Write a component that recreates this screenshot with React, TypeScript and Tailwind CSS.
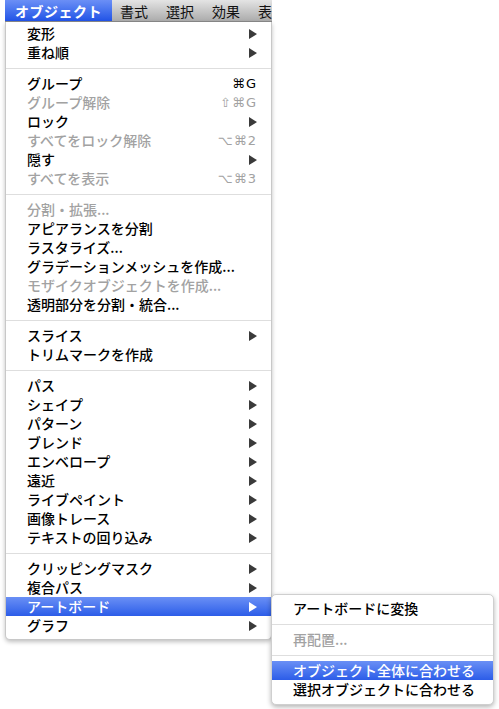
import React from 'react';

type Item =
  | { sep: true }
  | {
      sep?: false;
      label: string;
      disabled?: boolean;
      sub?: boolean;
      shortcut?: string;
      active?: boolean;
    };

const mainItems: Item[] = [
  { label: '変形', sub: true },
  { label: '重ね順', sub: true },
  { sep: true },
  { label: 'グループ', shortcut: '⌘G' },
  { label: 'グループ解除', shortcut: '⇧⌘G', disabled: true },
  { label: 'ロック', sub: true },
  { label: 'すべてをロック解除', shortcut: '⌥⌘2', disabled: true },
  { label: '隠す', sub: true },
  { label: 'すべてを表示', shortcut: '⌥⌘3', disabled: true },
  { sep: true },
  { label: '分割・拡張...', disabled: true },
  { label: 'アピアランスを分割' },
  { label: 'ラスタライズ...' },
  { label: 'グラデーションメッシュを作成...' },
  { label: 'モザイクオブジェクトを作成...', disabled: true },
  { label: '透明部分を分割・統合...' },
  { sep: true },
  { label: 'スライス', sub: true },
  { label: 'トリムマークを作成' },
  { sep: true },
  { label: 'パス', sub: true },
  { label: 'シェイプ', sub: true },
  { label: 'パターン', sub: true },
  { label: 'ブレンド', sub: true },
  { label: 'エンベロープ', sub: true },
  { label: '遠近', sub: true },
  { label: 'ライブペイント', sub: true },
  { label: '画像トレース', sub: true },
  { label: 'テキストの回り込み', sub: true },
  { sep: true },
  { label: 'クリッピングマスク', sub: true },
  { label: '複合パス', sub: true },
  { label: 'アートボード', sub: true, active: true },
  { label: 'グラフ', sub: true },
];

const subItems: Item[] = [
  { label: 'アートボードに変換' },
  { sep: true },
  { label: '再配置...', disabled: true },
  { sep: true },
  { label: 'オブジェクト全体に合わせる', active: true },
  { label: '選択オブジェクトに合わせる' },
];

const font = "font-['Noto_Sans_CJK_JP',sans-serif]";

const Arrow = ({ white }: { white?: boolean }) => (
  <svg width="8" height="10" viewBox="0 0 8 10">
    <polygon points="0,0 8,5 0,10" fill={white ? '#ffffff' : '#3a3a3a'} />
  </svg>
);

const MenuRows = ({ items }: { items: Item[] }) => (
  <>
    {items.map((it, i) =>
      it.sep ? (
        <div key={i} className="h-[12px] flex items-center">
          <div className="h-px w-full bg-[#dedede]" />
        </div>
      ) : (
        <div
          key={i}
          className={`h-[19px] flex items-center justify-between pl-[21px] pr-[14px] text-[14px] leading-[19px] font-medium ${
            it.active
              ? 'bg-gradient-to-b from-[#6a8ff5] to-[#2c5ce8] text-white'
              : it.disabled
              ? 'text-[#a2a2a2]'
              : 'text-black'
          }`}
        >
          <span className="whitespace-nowrap">{it.label}</span>
          {it.sub && <Arrow white={it.active} />}
          {it.shortcut && (
            <span className="font-['DejaVu_Sans',sans-serif] font-normal text-[13px] tracking-[1px]">
              {it.shortcut}
            </span>
          )}
        </div>
      )
    )}
  </>
);

export default function App() {
  return (
    <div className={`w-[499px] h-[709px] bg-white relative overflow-hidden ${font}`}>
      {/* menu bar */}
      <div className="flex h-[22px] w-[267px] ml-[5px] bg-gradient-to-b from-[#e4e4e4] to-[#acacac] border-b border-[#8a8a8a] text-[14px] leading-[22px] text-[#111] whitespace-nowrap overflow-hidden">
        <div className="shrink-0 px-[10px] bg-gradient-to-b from-[#6b8ff6] to-[#2152e6] text-white font-bold tracking-[0.5px]">
          オブジェクト
        </div>
        <div className="shrink-0 pl-[8px] pr-[18px]">書式</div>
        <div className="shrink-0 pr-[18px]">選択</div>
        <div className="shrink-0 pr-[18px]">効果</div>
        <div className="shrink-0">表示</div>
      </div>

      {/* main menu */}
      <div className="w-[267px] ml-[5px] pt-[2px] pb-[4px] bg-white border-l border-r border-b border-[#c8c8c8] rounded-b-[5px] shadow-[0_2px_4px_rgba(0,0,0,0.25)]">
        <MenuRows items={mainItems} />
      </div>

      {/* submenu */}
      <div className="absolute left-[271px] top-[594px] w-[223px] pt-[4px] pb-[5px] bg-white border border-[#cfcfcf] rounded-[5px] shadow-[0_2px_5px_rgba(0,0,0,0.3)]">
        <MenuRows items={subItems} />
      </div>
    </div>
  );
}
